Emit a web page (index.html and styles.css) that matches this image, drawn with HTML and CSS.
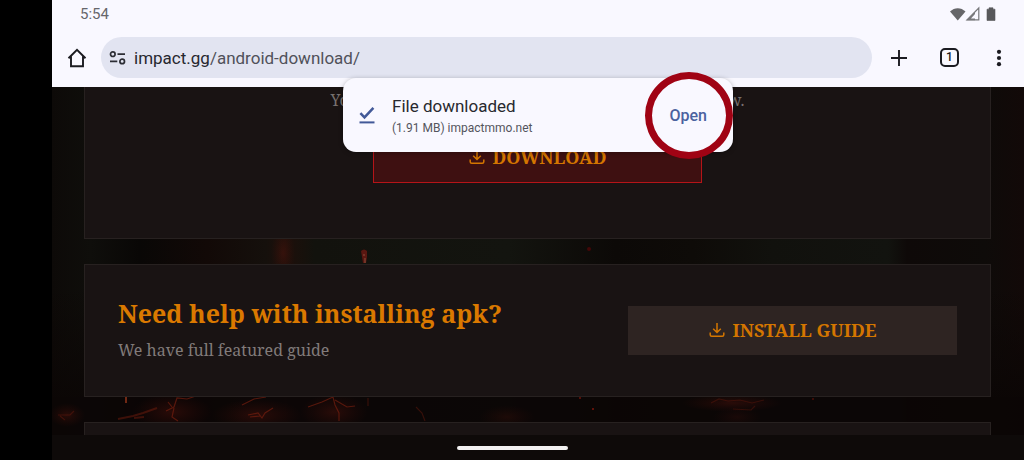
FILE: index.html
```html
<!DOCTYPE html>
<html lang="en">
<head>
<meta charset="utf-8">
<meta name="viewport" content="width=device-width, initial-scale=1">
<title>Android download</title>
<link rel="stylesheet" href="styles.css">
</head>
<body>
<div class="device">
  <header class="browser">
    <div class="status">
      <time class="clock">5:54</time>
      <svg class="status-icons" width="46" height="16" viewBox="0 0 46 16" aria-hidden="true">
        <path d="M0 5.5C4.5 1 11 1 15.500 5.500L7.750 14.500Z" fill="#666669"/>
        <path d="M28.800 2V13.800H17Z" fill="none" stroke="#77777a" stroke-width="1.200"/>
        <path d="M16.500 14.300L25 6.200V14.300Z" fill="#77777a"/>
        <path d="M25 8v4.500h-4z" fill="#f9f8ff"/>
        <path d="M37 3.200h2V1.800h4v1.400h2V14.500h-8Z" fill="#58585b" stroke="#58585b" stroke-linejoin="round" stroke-width=".6"/>
      </svg>
    </div>
    <div class="toolbar">
      <button class="tool" aria-label="Home">
        <svg width="20" height="20" viewBox="0 0 20 20"><path d="M1.500 10.300L10 1.900l8.500 8.400M4 8.500V18.200H16V8.500" fill="none" stroke="#1b1b21" stroke-width="1.900"/></svg>
      </button>
      <div class="address">
        <svg width="18" height="14" viewBox="0 0 18 14" fill="none" stroke="#2c2d34" stroke-width="1.700" aria-hidden="true"><circle cx="3.800" cy="3.200" r="2.300"/><path d="M8.500 3.200H16M1 10.400H8.300"/><circle cx="13.200" cy="10.400" r="2.300"/></svg>
        <a class="url" href="#"><span class="host">impact.gg</span>/android-download/</a>
      </div>
      <button class="tool" aria-label="New tab">
        <svg width="18" height="18" viewBox="0 0 18 18"><path d="M9 1V17M1 9H17" stroke="#1b1b21" stroke-width="1.900"/></svg>
      </button>
      <button class="tool" aria-label="Tabs"><span class="tab-count">1</span></button>
      <button class="tool" aria-label="Menu">
        <svg width="6" height="18" viewBox="0 0 6 18" fill="#1b1b21"><circle cx="3" cy="2.800" r="2.100"/><circle cx="3" cy="9" r="2.100"/><circle cx="3" cy="15.200" r="2.100"/></svg>
      </button>
    </div>
  </header>

  <main class="page">
    <svg class="art" viewBox="0 0 972 348" preserveAspectRatio="none" aria-hidden="true">
      <defs>
        <linearGradient id="haze">
          <stop offset="0" stop-color="#0d0a08"/><stop offset=".04" stop-color="#0f0e0b"/>
          <stop offset=".09" stop-color="#090706"/><stop offset=".16" stop-color="#120907"/>
          <stop offset=".22" stop-color="#15100c"/><stop offset=".24" stop-color="#1e0f0a"/>
          <stop offset=".27" stop-color="#12120d"/><stop offset=".47" stop-color="#13140f"/>
          <stop offset=".58" stop-color="#0c0907"/><stop offset=".66" stop-color="#0e0b08"/>
          <stop offset=".74" stop-color="#11110d"/><stop offset=".86" stop-color="#12130f"/>
          <stop offset=".88" stop-color="#0e0908"/><stop offset=".96" stop-color="#0e0b09"/>
          <stop offset="1" stop-color="#120908"/>
        </linearGradient>
        <linearGradient id="floor" x2="0" y2="1"><stop offset="0" stop-color="#0b0605" stop-opacity="0"/><stop offset="1" stop-color="#0b0605" stop-opacity=".9"/></linearGradient>
        <radialGradient id="ember"><stop offset="0" stop-color="#6a180e" stop-opacity=".32"/><stop offset="1" stop-color="#501008" stop-opacity="0"/></radialGradient>
      </defs>
      <rect width="972" height="348" fill="url(#haze)"/>
      <rect y="200" width="972" height="110" fill="url(#floor)"/>
      <rect y="310" width="972" height="38" fill="#0b0605" opacity=".9"/>
      <ellipse cx="231" cy="166" rx="12" ry="26" fill="url(#ember)"/>
      <g fill="url(#ember)">
        <ellipse cx="120" cy="325" rx="40" ry="18"/><ellipse cx="205" cy="328" rx="45" ry="16"/>
        <ellipse cx="282" cy="325" rx="34" ry="18"/><ellipse cx="15" cy="328" rx="18" ry="12"/>
        <ellipse cx="680" cy="316" rx="50" ry="9"/><ellipse cx="455" cy="330" rx="28" ry="12" opacity=".6"/>
        <ellipse cx="685" cy="330" rx="24" ry="10" opacity=".5"/>
      </g>
      <g fill="none" stroke="#7a2010" stroke-width="1.200" opacity=".65">
        <path d="M114 324l8-4 3-9 10 1 9-3M120 320l-4-5M122 321l-2 9 6 4"/>
        <path d="M66 332l15-3 10-3 14-5M82 331l10-1" stroke-width="2" opacity=".7"/>
        <path d="M6 328h12l4-4M8 329l5 4" opacity=".6"/>
        <path d="M190 318l12-6 12-2M196 328l10-2 4 5 3-5 8-5M198 330l10-1"/>
        <path d="M256 320l14-5 11-5 2 8 4 8v8M283 313l12 7 8-1M279 309h12"/>
        <path d="M316 311v8M364 320l6 6 3 8" opacity=".6"/>
        <path d="M659 316l8-4 9 2 12-1 12 3 12-3M681 322l18 1 4-4" opacity=".5"/>
      </g>
      <path d="M74 309v7" stroke="#93341a" stroke-width="1.500"/>
      <path d="M309 164q3-3 6 0v6l-1 6h-3l-1-6z" fill="#5a1711"/>
      <path d="M311 168h2M313 171v5" stroke="#a06a50" stroke-width="1" opacity=".7"/>
      <circle cx="537" cy="162" r="2" fill="#430808"/><circle cx="541" cy="322" r="1" fill="#7d170c"/>
      <circle cx="528" cy="311" r="1" fill="#6d130a"/><circle cx="761" cy="312" r="1" fill="#4d0f08"/>
    </svg>

    <section class="card card-download">
      <p class="note"><span>Yo</span><span>w.</span></p>
      <button class="action action-primary">
        <svg class="save" viewBox="0 0 16 16" aria-hidden="true"><path d="M8 1v9M4.200 6.700L8 10.500l3.800-3.800M1.200 10.500v2.300q0 1.500 1.500 1.500h10.600q1.500 0 1.500-1.500V10.500"/></svg>
        DOWNLOAD
      </button>
    </section>

    <section class="card card-guide">
      <div>
        <h2 class="title">Need help with installing apk?</h2>
        <p class="lead">We have full featured guide</p>
      </div>
      <button class="action">
        <svg class="save" viewBox="0 0 16 16" aria-hidden="true"><path d="M8 1v9M4.200 6.700L8 10.500l3.800-3.800M1.200 10.500v2.300q0 1.500 1.500 1.500h10.600q1.500 0 1.500-1.500V10.500"/></svg>
        INSTALL GUIDE
      </button>
    </section>

    <section class="card card-next"></section>
  </main>

  <footer class="navbar"><span class="handle"></span></footer>

  <aside class="toast" role="status">
    <svg width="16" height="18" viewBox="0 0 16 18" fill="none" stroke="#425998" aria-hidden="true"><path d="M1.400 7.200l4.100 4.200L14.400 1.900" stroke-width="2.500"/><path d="M.5 16.400H15.500" stroke-width="2"/></svg>
    <div class="toast-text">
      <strong class="toast-title">File downloaded</strong>
      <span class="toast-detail">(1.91 MB) impactmmo.net</span>
    </div>
    <button class="open">Open</button>
    <span class="ring"></span>
  </aside>
</div>
</body>
</html>
```
FILE: styles.css
```css
* { box-sizing: border-box; }

body {
  margin: 0;
  padding-left: 52px;
  background: #000;
  font-family: Roboto, "Liberation Sans", sans-serif;
}

button {
  margin: 0;
  padding: 0;
  border: 0;
  background: none;
  font: inherit;
  color: inherit;
}

p, h2 { margin: 0; font-weight: 400; }
svg { display: block; flex: none; }

.device {
  position: relative;
  display: flex;
  flex-direction: column;
  height: 100vh;
  overflow: hidden;
}

/* Browser bars */
.browser {
  flex: none;
  background: #f9f8ff;
  padding-bottom: 9px;
}

.status {
  display: flex;
  align-items: center;
  justify-content: space-between;
  height: 28px;
  padding: 0 28px;
}

.clock { font-size: 15px; color: #66666b; }

.toolbar {
  display: flex;
  align-items: center;
  padding-top: 9px;
}

.tool {
  display: flex;
  align-items: center;
  justify-content: center;
  width: 49px;
  height: 41px;
}

.tool:last-child { margin-right: 1px; }
.address + .tool { width: 53px; }

.address {
  flex: 1;
  display: flex;
  align-items: center;
  gap: 7px;
  height: 41px;
  padding: 0 8px;
  border-radius: 21px;
  background: #e2e4f1;
}

.url { font-size: 17px; color: #50515a; text-decoration: none; }
.host { color: #27282f; }

.tab-count {
  width: 19px;
  height: 19px;
  border: 2px solid #1b1b21;
  border-radius: 5px;
  font-size: 12px;
  font-weight: 500;
  line-height: 15px;
  text-align: center;
  color: #1b1b21;
}

/* Web page */
.page {
  position: relative;
  flex: 1;
  min-height: 0;
  display: flex;
  flex-direction: column;
  gap: 25px;
  padding: 0 33px 0 32px;
  overflow: hidden;
  font-family: "Noto Serif", "DejaVu Serif Condensed", "DejaVu Serif", serif;
}

.art {
  position: absolute;
  inset: 0;
  width: 100%;
  height: 100%;
}

.card {
  position: relative;
  flex: none;
  border: 1px solid #272120;
  background: #191313;
}

.card-download {
  display: flex;
  flex-direction: column;
  align-items: center;
  gap: 20px;
  padding-bottom: 55px;
  border-top: 0;
}

.note {
  display: flex;
  justify-content: space-between;
  width: 414px;
  font-size: 16px;
  line-height: 27px;
  color: #77706f;
}

.card-guide {
  display: flex;
  align-items: center;
  justify-content: space-between;
  padding: 32px 33px;
}

.card-next {
  height: 48px;
  margin-bottom: -36px;
}

.title {
  font-size: 25px;
  font-weight: 700;
  line-height: 32px;
  color: #da7900;
}

.lead {
  padding: 8px 0 1px;
  font-size: 16px;
  line-height: 26px;
  color: #817b7a;
}

.action {
  display: flex;
  align-items: center;
  justify-content: center;
  gap: 8px;
  width: 329px;
  height: 49px;
  padding-bottom: 2px;
  background: #2e2422;
  font-size: 18px;
  font-weight: 700;
  color: #d47600;
}

.action-primary {
  padding-bottom: 4px;
  border: 1px solid #b51418;
  background: #3e1011;
}

.save {
  width: 16px;
  height: 16px;
  fill: none;
  stroke: #d47600;
  stroke-width: 1.5;
}

.navbar {
  flex: none;
  display: flex;
  align-items: center;
  justify-content: center;
  height: 25px;
  padding-right: 52px;
  background: #0e0a09;
}

.handle {
  width: 111px;
  height: 4px;
  border-radius: 2px;
  background: #f2f1f1;
}

/* Download notice */
.toast {
  position: absolute;
  top: 78px;
  left: calc(50% - 195px);
  display: flex;
  align-items: center;
  width: 390px;
  height: 74px;
  padding: 0 26px 0 16px;
  border-radius: 13px;
  background: #f9f8ff;
  box-shadow: 0 1px 5px rgba(0, 0, 0, .3);
}

.toast-text {
  flex: 1;
  display: flex;
  flex-direction: column;
  padding: 1px 0 0 17px;
}

.toast-title {
  font-size: 17px;
  font-weight: 400;
  line-height: 24px;
  color: #28292f;
}

.toast-detail {
  font-size: 12px;
  line-height: 20px;
  color: #54555d;
}

.open {
  font-size: 16px;
  font-weight: 500;
  color: #4b629f;
}

.ring {
  position: absolute;
  top: -6px;
  right: 0;
  width: 88px;
  height: 87px;
  border: 7px solid #a00314;
  border-radius: 50%;
  pointer-events: none;
}
```
